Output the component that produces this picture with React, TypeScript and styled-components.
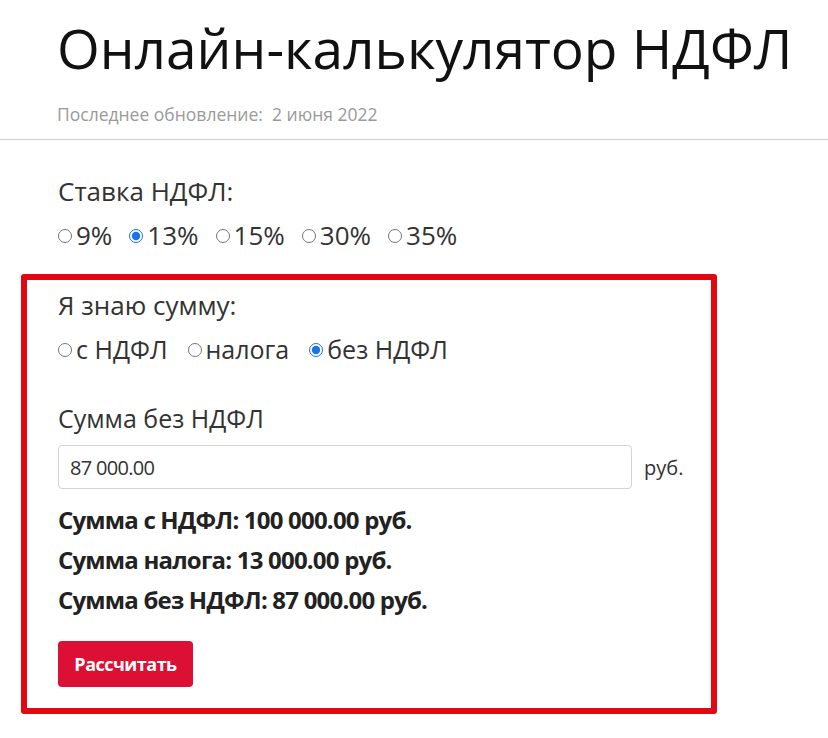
import React, { useState } from "react";
import styled, { createGlobalStyle } from "styled-components";

const GlobalStyle = createGlobalStyle`
  html, body {
    margin: 0;
    padding: 0;
    background: #fff;
  }
  body {
    font-family: "Open Sans", "Noto Sans", sans-serif;
    color: #333;
  }
`;

const Page = styled.div`
  width: 828px;
  height: 738px;
  overflow: hidden;
`;

const Header = styled.header`
  padding: 14px 0 0 57px;
`;

const Title = styled.h1`
  margin: 0;
  font-size: 55px;
  font-weight: 400;
  line-height: 68px;
  color: #111;
  white-space: nowrap;
`;

const Updated = styled.div`
  margin-top: 20px;
  font-size: 17.5px;
  color: #9a9a9a;
  white-space: pre;
`;

const Divider = styled.hr`
  margin: 13px 0 0;
  border: 0;
  border-top: 1px solid #cfcfcf;
`;

const Section = styled.div`
  padding: 0 0 0 58px;
`;

const Label = styled.div<{ $top: number; $size?: number }>`
  margin-top: ${(p) => p.$top}px;
  font-size: ${(p) => p.$size ?? 26}px;
  line-height: 30px;
  color: #333;
`;

const RadioRow = styled.div<{ $size: number; $gap: number }>`
  display: flex;
  align-items: center;
  gap: ${(p) => p.$gap}px;
  margin-top: 14px;
  font-size: ${(p) => p.$size}px;
`;

const RadioLabel = styled.label`
  display: flex;
  align-items: center;
  gap: 4px;
  line-height: 30px;
  color: #333;
  cursor: pointer;
`;

const Radio = styled.input.attrs({ type: "radio" })`
  margin: 2px 0 0;
  width: 14px;
  height: 14px;
  accent-color: #1a73e8;
`;

const Highlight = styled.div`
  margin: 24px 0 0 21px;
  width: 696px;
  height: 440px;
  box-sizing: border-box;
  border: 6px solid #e30613;
  border-radius: 3px;
  padding: 10px 0 0 31px;
`;

const InputRow = styled.div`
  display: flex;
  align-items: center;
  gap: 12px;
  margin-top: 12px;
`;

const AmountInput = styled.input`
  width: 574px;
  height: 44px;
  box-sizing: border-box;
  border: 1px solid #ced4da;
  border-radius: 4px;
  padding: 0 11px;
  font-family: "Open Sans", sans-serif;
  font-size: 20px;
  letter-spacing: -0.7px;
  color: #333;
  outline: none;
`;

const Unit = styled.span`
  font-size: 20px;
  color: #333;
`;

const Results = styled.div`
  display: flex;
  flex-direction: column;
  gap: 12px;
  margin-top: 17px;
`;

const ResultLine = styled.div`
  font-size: 24px;
  line-height: 28px;
  font-weight: 700;
  color: #222;
  letter-spacing: -0.8px;
`;

const Button = styled.button`
  margin-top: 27px;
  width: 135px;
  height: 46px;
  border: 0;
  border-radius: 4px;
  background: #dc0f34;
  color: #fff;
  font-family: "Open Sans", sans-serif;
  font-size: 18px;
  font-weight: 700;
  letter-spacing: -0.5px;
  cursor: pointer;
`;

const rates = ["9%", "13%", "15%", "30%", "35%"];
const modes = ["с НДФЛ", "налога", "без НДФЛ"];

export default function App() {
  const [rate, setRate] = useState("13%");
  const [mode, setMode] = useState("без НДФЛ");
  const [value, setValue] = useState("87 000.00");

  return (
    <Page>
      <GlobalStyle />
      <Header>
        <Title>Онлайн-калькулятор НДФЛ</Title>
        <Updated>Последнее обновление:  2 июня 2022</Updated>
      </Header>
      <Divider />
      <Section>
        <Label $top={36}>Ставка НДФЛ:</Label>
        <RadioRow $size={26} $gap={17}>
          {rates.map((r) => (
            <RadioLabel key={r}>
              <Radio name="rate" checked={rate === r} onChange={() => setRate(r)} />
              {r}
            </RadioLabel>
          ))}
        </RadioRow>
      </Section>
      <Highlight>
        <Label $top={0}>Я знаю сумму:</Label>
        <RadioRow $size={25} $gap={20}>
          {modes.map((m) => (
            <RadioLabel key={m}>
              <Radio name="mode" checked={mode === m} onChange={() => setMode(m)} />
              {m}
            </RadioLabel>
          ))}
        </RadioRow>
        <Label $top={39} $size={25}>
          Сумма без НДФЛ
        </Label>
        <InputRow>
          <AmountInput value={value} onChange={(e) => setValue(e.target.value)} />
          <Unit>руб.</Unit>
        </InputRow>
        <Results>
          <ResultLine>Сумма с НДФЛ: 100 000.00 руб.</ResultLine>
          <ResultLine>Сумма налога: 13 000.00 руб.</ResultLine>
          <ResultLine>Сумма без НДФЛ: 87 000.00 руб.</ResultLine>
        </Results>
        <Button>Рассчитать</Button>
      </Highlight>
    </Page>
  );
}
